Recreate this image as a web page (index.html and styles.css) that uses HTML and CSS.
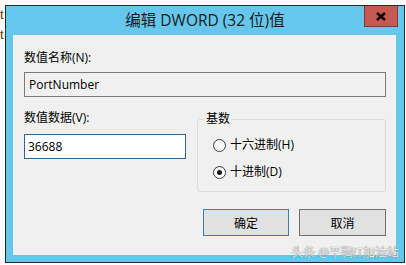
FILE: index.html
```html
<!DOCTYPE html>
<html lang="zh-CN">
<head>
<meta charset="utf-8">
<title>编辑 DWORD (32 位)值</title>
<link rel="stylesheet" href="styles.css">
</head>
<body>
<div class="desktop">
  <div class="edge">
    <span>t</span>
    <span>t</span>
  </div>
  <div class="window">
    <div class="titlebar">
      <div class="title">编辑 DWORD (32 位)值</div>
      <button class="close" aria-label="关闭">
        <svg width="10" height="9" viewBox="0 0 10 9"><path d="M1 1 L9 8 M9 1 L1 8" stroke="#000" stroke-width="2.4" fill="none"/></svg>
      </button>
    </div>
    <div class="content">
      <div class="label first">数值名称(N):</div>
      <div class="field readonly">PortNumber</div>
      <div class="row">
        <div class="col">
          <div class="label second">数值数据(V):</div>
          <div class="field value">36688</div>
        </div>
        <div class="group">
          <span class="legend">基数</span>
          <div class="radio"><span class="dot"></span>十六进制(H)</div>
          <div class="radio on"><span class="dot"></span>十进制(D)</div>
        </div>
      </div>
      <div class="buttons">
        <button class="btn default">确定</button>
        <button class="btn">取消</button>
      </div>
    </div>
    <div class="watermark">头条 @平胸IT加油站</div>
  </div>
</div>
</body>
</html>
```
FILE: styles.css
```css
* { box-sizing: border-box; }
html, body { margin: 0; padding: 0; background: #fff; }
body {
  font-family: "Open Sans", "Noto Sans CJK SC", sans-serif;
  font-size: 12px;
  color: #000;
  width: 406px;
  height: 265px;
  overflow: hidden;
}
.desktop {
  display: flex;
  padding-top: 5px;
}
.edge {
  width: 5px;
  overflow: hidden;
  display: flex;
  flex-direction: column;
  font-family: "Liberation Sans", sans-serif;
  font-size: 13px;
  line-height: 20px;
  color: #5a3a10;
}
.window {
  position: relative;
  width: 400px;
  height: 258px;
  border: 1px solid #2a2a2a;
  background: #64c7eb;
  display: flex;
  flex-direction: column;
}
.titlebar {
  height: 29px;
  display: grid;
  grid-template-columns: 1fr auto 1fr;
  align-items: start;
}
.title {
  grid-column: 2;
  font-size: 15.5px;
  line-height: 29px;
  color: #1b1b1b;
  white-space: nowrap;
}
.close {
  grid-column: 3;
  justify-self: end;
  margin: 0 6px 0 0;
  width: 34px;
  height: 21px;
  padding: 0;
  border: 1px solid #7a3b36;
  border-top: none;
  background: #c75a50;
  display: flex;
  align-items: center;
  justify-content: center;
}
.close svg { display: block; margin-top: 1px; }
.content {
  margin: 0 8px 0 7px;
  width: 383px;
  height: 220px;
  background: #f0f0f0;
  padding: 16px 10px 0 11px;
  display: flex;
  flex-direction: column;
}
.label { line-height: 14px; white-space: nowrap; }
.label.second { line-height: 16px; }
.field {
  height: 25px;
  line-height: 23px;
  padding-left: 4px;
  border: 1px solid #7a7a7a;
  background: #f0f0f0;
  margin-top: 7px;
}
.field.value {
  width: 162px;
  margin-top: 8px;
  border-color: #2a6498;
  background: #fff;
  padding-left: 3px;
}
.row {
  display: flex;
  justify-content: space-between;
  margin-top: 13px;
}
.col { display: flex; flex-direction: column; }
.group {
  position: relative;
  width: 189px;
  height: 73px;
  margin-top: 9px;
  border: 1px solid #d5dde3;
  border-radius: 3px;
  padding: 18px 0 0 15px;
  display: flex;
  flex-direction: column;
  gap: 13px;
}
.legend {
  position: absolute;
  top: -8px;
  left: 6px;
  padding: 0 2px;
  line-height: 14px;
  background: #f0f0f0;
}
.radio {
  display: flex;
  align-items: center;
  gap: 4px;
  line-height: 14px;
  white-space: nowrap;
}
.dot {
  width: 13px;
  height: 13px;
  border-radius: 50%;
  border: 1px solid #3c3c3c;
  background: linear-gradient(#f4f4f4, #ffffff);
  display: flex;
  align-items: center;
  justify-content: center;
}
.radio.on .dot::after {
  content: "";
  width: 5px;
  height: 5px;
  border-radius: 50%;
  background: #1a1a1a;
}
.buttons {
  display: flex;
  justify-content: flex-end;
  gap: 10px;
  margin-top: 17px;
}
.btn {
  font-family: inherit;
  font-size: 12px;
  color: #000;
  width: 87px;
  height: 27px;
  padding: 0;
  background: #e1e1e1;
  border: 1px solid #707070;
}
.btn.default {
  width: 86px;
  border-color: #3c7fb1;
}
.watermark {
  position: absolute;
  right: 5px;
  bottom: 2px;
  line-height: 14px;
  font-size: 12px;
  color: #ececec;
  text-shadow: 0 0 1px #4a4a4a;
  white-space: nowrap;
}
```
